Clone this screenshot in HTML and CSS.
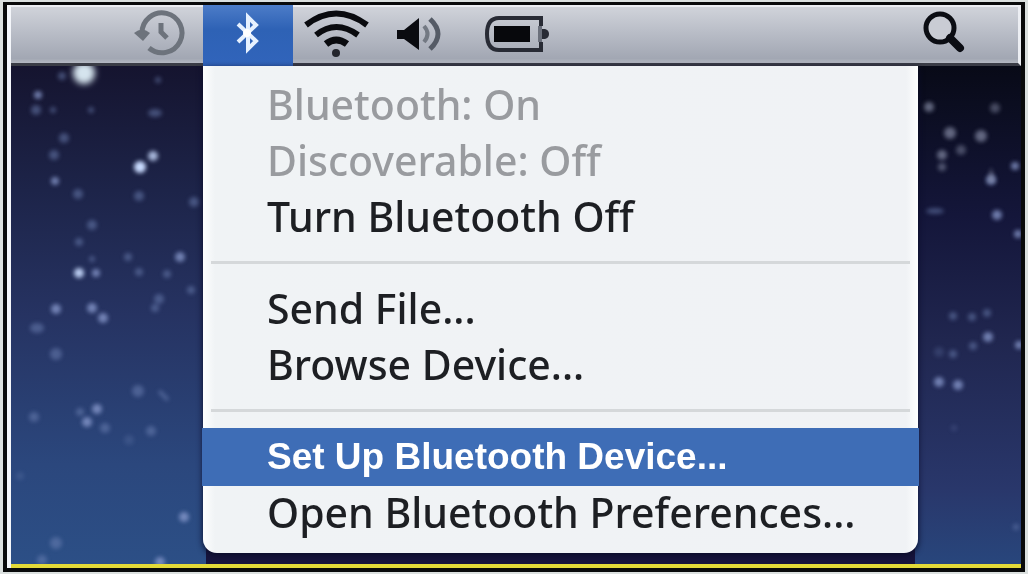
FILE: index.html
```html
<!DOCTYPE html>
<html lang="en">
<head>
<meta charset="utf-8">
<title>Bluetooth menu</title>
<link rel="stylesheet" href="styles.css">
</head>
<body>
<div class="screen">
  <header class="menubar">
    <button class="status" aria-label="Time Machine">
      <svg width="84" height="58" viewBox="119 5 84 58" fill="none" stroke="#6d737c">
        <path d="M142 33a20 20 0 1 1 7 15" stroke-width="5"/>
        <path d="M134 33q8-7 16 0l-7 8z" fill="#6d737c" stroke="none"/>
        <path d="M161 23v9l6 6" stroke-width="5"/>
      </svg>
    </button>
    <button class="status status-active" aria-label="Bluetooth">
      <svg width="90" height="58" viewBox="203 5 90 58" fill="none" stroke="#e6f1ff" stroke-width="4">
        <path d="M238 24l18 17-8 8V17l8 8-18 17"/>
        <circle cx="247" cy="33" r="4" fill="#fff" stroke="none"/>
      </svg>
    </button>
    <button class="status" aria-label="Wi-Fi">
      <svg width="90" height="58" viewBox="293 5 90 58" fill="none" stroke="#0a0b0f" stroke-width="6">
        <path d="M306 25q30-23 61 0"/>
        <path d="M316 35q20-16 42 0"/>
        <path d="M326 44q10-8 21 0" stroke-width="7"/>
        <circle cx="336" cy="53" r="4" fill="#23252c" stroke="none"/>
      </svg>
    </button>
    <button class="status" aria-label="Volume">
      <svg width="72" height="58" viewBox="383 5 72 58" fill="none">
        <path d="M397 30h7l15-12v32l-15-11h-7z" fill="#0a0b10"/>
        <path d="M424 26q7 8 0 16" stroke="#737983" stroke-width="4"/>
        <path d="M430 19q16 15 0 30" stroke="#555b66" stroke-width="5"/>
      </svg>
    </button>
    <button class="status" aria-label="Battery">
      <svg width="124" height="58" viewBox="455 5 124 58" fill="none">
        <path d="M541 26v-8h-42q-12 0-12 16t12 16h42v-8" stroke="#282b35" stroke-width="4"/>
        <path d="M495 27h34v14h-34z" fill="#07080c" stroke="#07080c" stroke-width="2"/>
        <path d="M540 26v16" stroke="#6b707c" stroke-width="4"/>
        <path d="M542 29h3q4 1 4 5t-4 5h-3z" fill="#282b35"/>
      </svg>
    </button>
    <button class="status status-search" aria-label="Search">
      <svg width="84" height="58" viewBox="901 5 84 58" fill="none" stroke="#0b0d13">
        <circle cx="939" cy="28" r="14" fill="#c9ccd4" stroke-width="5"/>
        <path d="M949 38l10 10" stroke-width="8" stroke-linecap="round"/>
      </svg>
    </button>
  </header>
  <main class="desktop">
    <svg class="wallpaper" viewBox="11 66 1010 498" preserveAspectRatio="none" aria-hidden="true">
      <defs>
        <linearGradient id="left" x1="0" y1="0" x2="0" y2="1">
          <stop offset="0" stop-color="#15142f"/>
          <stop offset=".25" stop-color="#1d2449"/>
          <stop offset=".5" stop-color="#263362"/>
          <stop offset=".8" stop-color="#2b477d"/>
          <stop offset="1" stop-color="#2c4f86"/>
        </linearGradient>
        <linearGradient id="right" x1="0" y1="0" x2="0" y2="1">
          <stop offset="0" stop-color="#080a17"/>
          <stop offset=".3" stop-color="#14163a"/>
          <stop offset=".55" stop-color="#20264f"/>
          <stop offset=".85" stop-color="#29376b"/>
          <stop offset="1" stop-color="#28467c"/>
        </linearGradient>
        <filter id="soft" x="-50%" y="-50%" width="200%" height="200%"><feGaussianBlur stdDeviation="2"/></filter>
        <filter id="glow" x="-50%" y="-50%" width="200%" height="200%"><feGaussianBlur stdDeviation="3"/></filter>
      </defs>
      <rect x="11" y="66" width="505" height="498" fill="url(#left)"/>
      <rect x="515" y="66" width="506" height="498" fill="url(#right)"/>
      <rect x="206" y="540" width="709" height="24" fill="#17143c"/>
      <circle cx="84" cy="73" r="11" fill="#d5e4ee" filter="url(#glow)"/>
      <g fill="#c9dbff" filter="url(#soft)">
        <circle cx="140" cy="167" r="6"/>
        <circle cx="153" cy="156" r="5" opacity=".8"/>
        <circle cx="79" cy="273" r="5" opacity=".9"/>
      </g>
      <g fill="#8c9dd0" filter="url(#soft)" opacity=".75">
        <circle cx="38" cy="95" r="4"/>
        <circle cx="55" cy="181" r="4"/>
        <circle cx="96" cy="273" r="4"/>
        <circle cx="180" cy="257" r="5"/>
        <circle cx="92" cy="308" r="5"/>
        <circle cx="56" cy="309" r="5"/>
        <circle cx="103" cy="318" r="5"/>
        <circle cx="97" cy="409" r="5"/>
        <circle cx="87" cy="422" r="5"/>
        <circle cx="184" cy="517" r="5"/>
        <circle cx="160" cy="562" r="5"/>
        <circle cx="991" cy="180" r="5"/>
        <circle cx="997" cy="215" r="5"/>
        <circle cx="1015" cy="166" r="4"/>
        <circle cx="1018" cy="234" r="4"/>
        <circle cx="988" cy="337" r="5"/>
        <circle cx="1019" cy="345" r="4"/>
        <circle cx="958" cy="385" r="5"/>
        <circle cx="939" cy="382" r="5"/>
      </g>
      <g fill="#868ca6" filter="url(#soft)" opacity=".7">
        <circle cx="929" cy="107" r="5"/>
        <circle cx="950" cy="133" r="6"/>
        <circle cx="981" cy="136" r="6"/>
        <circle cx="942" cy="155" r="5"/>
        <circle cx="995" cy="108" r="5" opacity=".7"/>
        <circle cx="961" cy="150" r="5" opacity=".7"/>
        <circle cx="942" cy="167" r="4" opacity=".8"/>
        <path d="M988 182l3-15 4 15z"/>
      </g>
      <g fill="#7185b8" filter="url(#soft)" opacity=".5">
        <circle cx="62" cy="76" r="4"/>
        <circle cx="158" cy="80" r="3"/>
        <circle cx="36" cy="110" r="5"/>
        <circle cx="53" cy="110" r="3"/>
        <circle cx="91" cy="110" r="3"/>
        <ellipse cx="155" cy="113" rx="7" ry="4"/>
        <circle cx="64" cy="138" r="5"/>
        <circle cx="54" cy="155" r="5"/>
        <circle cx="78" cy="194" r="5"/>
        <circle cx="139" cy="196" r="5"/>
        <circle cx="194" cy="202" r="5"/>
        <circle cx="92" cy="225" r="5"/>
        <circle cx="79" cy="242" r="4"/>
        <circle cx="92" cy="259" r="3"/>
        <circle cx="128" cy="257" r="4"/>
        <circle cx="139" cy="272" r="4"/>
        <circle cx="167" cy="274" r="4"/>
        <circle cx="191" cy="290" r="4"/>
        <circle cx="159" cy="299" r="5"/>
        <circle cx="155" cy="308" r="4"/>
        <ellipse cx="37" cy="328" rx="7" ry="5"/>
        <circle cx="56" cy="354" r="6"/>
        <circle cx="138" cy="391" r="6"/>
        <path d="M159 391l9 9" stroke="#7185b8" stroke-width="4"/>
        <circle cx="80" cy="412" r="4"/>
        <circle cx="34" cy="417" r="5"/>
        <circle cx="105" cy="428" r="5"/>
        <circle cx="151" cy="431" r="5"/>
        <circle cx="129" cy="440" r="5" opacity=".5"/>
        <circle cx="20" cy="476" r="4" opacity=".5"/>
        <circle cx="56" cy="543" r="6"/>
        <circle cx="42" cy="560" r="5"/>
        <ellipse cx="935" cy="211" rx="9" ry="3"/>
        <circle cx="953" cy="316" r="4"/>
        <circle cx="972" cy="317" r="4"/>
        <circle cx="987" cy="313" r="4"/>
        <circle cx="973" cy="346" r="4"/>
        <circle cx="953" cy="354" r="4"/>
        <circle cx="939" cy="352" r="5" opacity=".5"/>
        <circle cx="954" cy="428" r="3" opacity=".5"/>
        <circle cx="1016" cy="527" r="3"/>
      </g>
    </svg>
    <nav class="menu" aria-label="Bluetooth">
      <button class="item" disabled>Bluetooth: On</button>
      <button class="item" disabled>Discoverable: Off</button>
      <button class="item">Turn Bluetooth Off</button>
      <hr class="rule">
      <button class="item">Send File...</button>
      <button class="item">Browse Device...</button>
      <hr class="rule">
      <button class="item item-selected">Set Up Bluetooth Device...</button>
      <button class="item item-last">Open Bluetooth Preferences...</button>
    </nav>
  </main>
</div>
</body>
</html>
```
FILE: styles.css
```css
* {
  box-sizing: border-box;
}

body {
  margin: 0;
  padding: 2px 3px;
  background: #dbe0df;
}

.screen {
  display: flex;
  flex-direction: column;
  min-height: calc(100vh - 4px);
  border: 4px solid #090a0b;
  border-top-width: 3px;
  background: #f4f6fa;
  padding-left: 4px;
}

.menubar {
  display: flex;
  height: 61px;
  padding: 0 32px 0 108px;
  border-top: 2px solid #eceef3;
  border-right: 3px solid #eceef3;
  border-bottom: 3px solid #3a3c46;
  background: linear-gradient(#d0d3da, #b9bdc7 45%, #a2a7b3 92%, #b4b8c2);
}

.status {
  display: flex;
  margin: -2px 0 0;
  padding: 0;
  border: 0;
  background: none;
}

.status-active {
  height: 61px;
  background: linear-gradient(#4c7cc8, #2e62b5 40%, #3164bb);
}

.status-search {
  margin-left: auto;
}

.desktop {
  position: relative;
  display: flex;
  flex: 1;
  align-items: flex-start;
  padding: 0 103px 10px 192px;
  border-bottom: 4px solid #e3da38;
}

.wallpaper {
  position: absolute;
  inset: 0;
  width: 100%;
  height: 100%;
}

.menu {
  position: relative;
  display: flex;
  flex: 1;
  flex-direction: column;
  padding: 10px 0 15px;
  border-radius: 0 0 14px 14px;
  background: linear-gradient(90deg, #fdfefe, #f0f3f5 12px, #f0f2f5 calc(100% - 12px), #fdfefe);
  box-shadow: 0 2px 6px #0a0c28;
}

.item {
  height: 56px;
  padding: 0 32px 0 64px;
  border: 0;
  background: none;
  color: #1d1f23;
  font: 500 41px/56px "Noto Sans", "Open Sans", sans-serif;
  text-align: left;
  white-space: nowrap;
}

.item:disabled {
  color: #999b9f;
}

.item-selected {
  height: 58px;
  margin: 0 -1px;
  padding: 0 32px 0 65px;
  background: #3e6db6;
  color: #fff;
  font: bold 37px/56px "Liberation Sans", Arial, sans-serif;
}

.item-last {
  height: 52px;
  line-height: 52px;
}

.rule {
  width: calc(100% - 16px);
  height: 3px;
  margin: 17px 8px 16px;
  border: 0;
  background: #d5d8da;
}
```
